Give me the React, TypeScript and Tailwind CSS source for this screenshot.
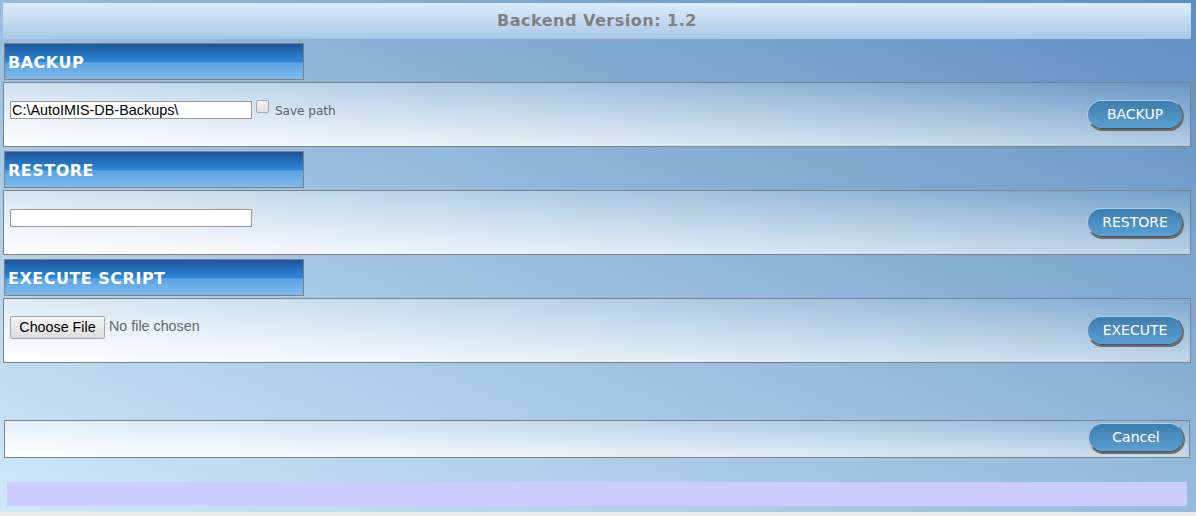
import React from "react";

const verdana = "font-['DejaVu_Sans',Verdana,sans-serif]";
const arial = "font-['Liberation_Sans',Arial,sans-serif]";

function SectionHeader({ title }: { title: string }) {
  return (
    <div
      className={`ml-[4px] mt-[4px] flex h-[37px] w-[300px] items-center border border-[#808080] bg-[linear-gradient(to_bottom,#1d559c_0%,#2a86d6_50%,#5aa2e4_54%,#80bcee_100%)] pl-[3px] pt-[3px] text-[16px] font-bold tracking-[0.5px] text-white ${verdana}`}
    >
      <span>{title}</span>
    </div>
  );
}

function PillButton({ label }: { label: string }) {
  return (
    <button
      className={`flex h-[29px] w-[96px] items-center justify-center rounded-full border border-t-[#9fd0f0] border-l-[#b8c8d6] border-r-[#606060] border-b-[#505050] bg-[linear-gradient(to_bottom,#3f7cae,#5aa0d2)] text-[14px] text-white shadow-[1px_2px_0_#6b6b6b] ${verdana}`}
    >
      {label}
    </button>
  );
}

function Panel({ children }: { children: React.ReactNode }) {
  return (
    <div className="ml-[3px] mt-[2px] flex h-[65px] w-[1188px] items-start justify-between border border-[#808080] bg-[linear-gradient(to_top_right,#ffffff,rgba(255,255,255,0))] pl-[6px] pr-[7px] pt-[17px]">
      {children}
    </div>
  );
}

export default function App() {
  return (
    <div className="h-[516px] w-[1196px] overflow-hidden bg-[#ebebeb]">
      <div className="flex h-[512px] w-[1196px] flex-col bg-[linear-gradient(to_top_right,#d0e8fa,#5c8ec0)] pt-[3px]">
        <div
          className={`ml-[3px] flex h-[36px] w-[1188px] items-center justify-center bg-[linear-gradient(to_bottom,#dcecfc,#a7c8e6)] text-[16px] font-bold tracking-[0.5px] text-[#7f7f7f] ${verdana}`}
        >
          Backend Version: 1.2
        </div>

        <SectionHeader title="BACKUP" />
        <Panel>
          <div className="mt-[1px] flex items-start">
            <input
              type="text"
              defaultValue="C:\AutoIMIS-DB-Backups\"
              className={`h-[18px] w-[242px] border border-[#999] bg-white px-[1px] text-[14.4px] leading-[16px] text-black outline-none ${arial}`}
            />
            <span className="ml-[4px] -mt-[1px] h-[13px] w-[13px] rounded-[2px] border border-[#a8a8a8] bg-[linear-gradient(to_bottom,#f4f4f4,#dedede)]" />
            <span className={`ml-[6px] mt-[1px] text-[12px] text-[#606060] ${verdana}`}>Save path</span>
          </div>
          <PillButton label="BACKUP" />
        </Panel>

        <SectionHeader title="RESTORE" />
        <Panel>
          <div className="mt-[1px] flex items-start">
            <input
              type="text"
              defaultValue=""
              className={`h-[18px] w-[242px] border border-[#999] bg-white px-[1px] text-[14.4px] leading-[16px] text-black outline-none ${arial}`}
            />
          </div>
          <PillButton label="RESTORE" />
        </Panel>

        <SectionHeader title="EXECUTE SCRIPT" />
        <Panel>
          <div className={`flex items-center text-[14.3px] ${arial}`}>
            <span className="flex h-[23px] w-[95px] items-center justify-center rounded-[2px] border border-[#a6a6a6] bg-[linear-gradient(to_bottom,#f5f5f5,#dddddd)] text-black">
              Choose File
            </span>
            <span className="ml-[4px] -mt-[1px] text-[#666]">No file chosen</span>
          </div>
          <PillButton label="EXECUTE" />
        </Panel>

        <div className="ml-[4px] mt-[57px] flex h-[38px] w-[1186px] items-start justify-end border border-[#808080] bg-[linear-gradient(to_top_right,#ffffff,rgba(255,255,255,0))] pr-[5px] pt-[2px]">
          <PillButton label="Cancel" />
        </div>

        <div className="ml-[7px] mt-[24px] h-[24px] w-[1180px] bg-[#ccccff]" />
      </div>
    </div>
  );
}
